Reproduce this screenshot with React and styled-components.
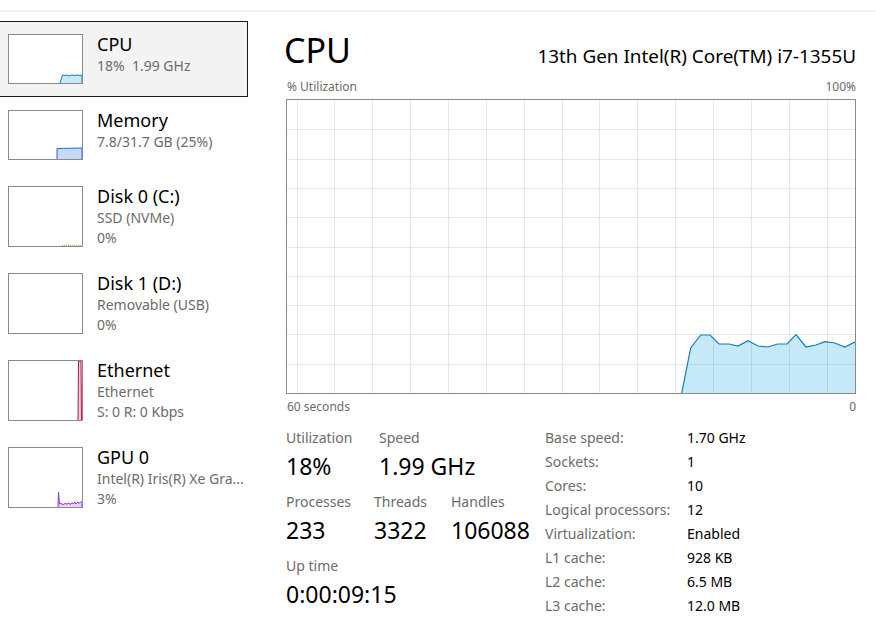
import styled, { createGlobalStyle } from 'styled-components';

const GlobalStyle = createGlobalStyle`
  html, body {
    margin: 0;
    padding: 0;
    background: #ffffff;
  }
  body {
    font-family: 'Noto Sans', 'Segoe UI', sans-serif;
    color: #000;
  }
`;

const Window = styled.div`
  width: 876px;
  height: 635px;
  overflow: hidden;
  background: #fff;
`;

const TopStrip = styled.div`
  height: 10px;
  border-bottom: 2px solid #eef2f2;
`;

const Body = styled.div`
  display: flex;
`;

//sidebar
const Sidebar = styled.div`
  width: 249px;
  padding-top: 9px;
  display: flex;
  flex-direction: column;
`;

const Item = styled.div`
  display: flex;
  align-items: flex-start;
  gap: 14px;
  padding: 12px 0 12px 8px;
  border: 1px solid ${({ $selected }) => ($selected ? '#1a1a1a' : 'transparent')};
  border-left: none;
  background: ${({ $selected }) => ($selected ? '#f3f3f3' : 'transparent')};
  width: 248px;
  box-sizing: border-box;
`;

const Thumb = styled.div`
  width: 75px;
  height: ${({ $h }) => $h}px;
  border: 1px solid #8a8a8a;
  background: #fff;
  box-sizing: border-box;
  flex-shrink: 0;

  svg {
    display: block;
  }
`;

const ItemText = styled.div`
  display: flex;
  flex-direction: column;
  margin-top: -2px;
  margin-bottom: -4px;
`;

const ItemTitle = styled.div`
  font-size: 18px;
  line-height: 24px;
  color: #000;
`;

const ItemSub = styled.div`
  font-size: 14px;
  line-height: 20px;
  color: #6b6b6b;
  white-space: pre;
`;

//main panel
const Main = styled.div`
  flex: 1;
  padding: 0 20px 0 38px;
  display: flex;
  flex-direction: column;
`;

const Header = styled.div`
  display: flex;
  justify-content: space-between;
  align-items: baseline;
  margin-top: 14px;
  height: 53px;
`;

const Title = styled.h1`
  margin: 0;
  font-weight: 400;
  font-size: 34px;
  line-height: 48px;
  margin-left: -2px;
`;

const Model = styled.div`
  font-size: 18.9px;
  line-height: 48px;
`;

const AxisRow = styled.div`
  display: flex;
  justify-content: space-between;
  font-size: 12px;
  line-height: 16px;
  color: #6b6b6b;
  margin-top: ${({ $top }) => $top}px;
  padding-left: 1px;
`;

const Graph = styled.div`
  width: 570px;
  height: 295px;
  border: 1px solid #8a8a8a;
  box-sizing: border-box;
  margin-top: 4px;

  svg {
    display: block;
  }
`;

const Stats = styled.div`
  display: flex;
  margin-top: 13px;
`;

const LeftStats = styled.div`
  width: 258px;
  display: flex;
  flex-direction: column;
`;

const StatRow = styled.div`
  display: flex;
  margin-bottom: 8px;
`;

const Stat = styled.div`
  width: ${({ $w }) => ($w ? `${$w}px` : 'auto')};
  display: flex;
  flex-direction: column;
`;

const StatLabel = styled.div`
  font-size: 14px;
  line-height: 20px;
  color: #6b6b6b;
`;

const StatValue = styled.div`
  font-size: 23px;
  line-height: 36px;
  color: #000;
  white-space: nowrap;
`;

const Specs = styled.div`
  display: grid;
  grid-template-columns: 142px auto;
  grid-auto-rows: 24px;
  align-items: center;
  font-size: 14px;
  margin-top: -3px;
  padding-left: 1px;
`;

const SpecLabel = styled.div`
  color: #6b6b6b;
`;

const SpecValue = styled.div`
  color: #000;
`;

const sideItems = [
  {
    title: 'CPU',
    lines: ['18%  1.99 GHz'],
    h: 50,
    selected: true,
    graph: {
      stroke: '#117dbb',
      fill: '#c6e9f8',
      points: '51,48 53.5,40 56,40.5 58,40 60,41 63,40 66,40.5 69,40 71,40.5 73,40 73,48',
    },
  },
  {
    title: 'Memory',
    lines: ['7.8/31.7 GB (25%)'],
    h: 50,
    graph: {
      stroke: '#1a6ed8',
      fill: '#c6daf7',
      points: '48,48 48,37.5 73,37 73,48',
    },
  },
  {
    title: 'Disk 0 (C:)',
    lines: ['SSD (NVMe)', '0%'],
    h: 61,
    graph: {
      stroke: '#6fae3a',
      fill: 'none',
      points: '53,58.5 55,58.5 57,58 59,58.5 62,58.5 64,58 66,58.5 69,58.5 71,58 73,58.5',
      dash: '1 1',
    },
  },
  {
    title: 'Disk 1 (D:)',
    lines: ['Removable (USB)', '0%'],
    h: 61,
  },
  {
    title: 'Ethernet',
    lines: ['Ethernet', 'S: 0 R: 0 Kbps'],
    h: 61,
    graph: {
      stroke: '#b0164c',
      fill: '#f1c9d7',
      points: '69,59 69.5,0 72,0 72.5,59',
    },
  },
  {
    title: 'GPU 0',
    lines: ['Intel(R) Iris(R) Xe Gra...', '3%'],
    h: 61,
    graph: {
      stroke: '#9132d6',
      fill: '#e6d3f6',
      points:
        '49,59 49.5,44 50.5,56 52,55.5 54,56.5 56,55.5 58,56 60,55 61,56.5 63,55 65,55.5 66,54 67,56 69,54 70,55.5 72,53.5 73,54.5 73,59',
    },
  },
];

const ThumbGraph = ({ h, graph }) => (
  <Thumb $h={h}>
    <svg width="73" height={h - 2} viewBox={`0 0 73 ${h - 2}`}>
      {graph && (
        <polyline
          points={graph.points}
          fill={graph.fill}
          stroke={graph.stroke}
          strokeWidth="1"
          strokeDasharray={graph.dash}
        />
      )}
    </svg>
  </Thumb>
);

const cpuPoints = [
  [394.7, 293],
  [403.7, 248],
  [413.7, 235],
  [423, 235],
  [432, 244],
  [442, 244],
  [451, 246],
  [461, 240.7],
  [471, 246],
  [481, 247],
  [490.7, 244],
  [500, 244],
  [509, 234.7],
  [519, 247],
  [529, 245],
  [538, 241.7],
  [548, 243],
  [557.7, 247],
  [568, 242],
];

const GW = 568;
const GH = 293;

const UsageGraph = () => {
  const vLines = Array.from({ length: 15 }, (_, i) => 9.5 + i * (GW / 15));
  const hLines = Array.from({ length: 9 }, (_, i) => Math.round((i + 1) * (GH / 10)) + 0.5);
  const line = cpuPoints.map(([x, y]) => `${x},${y}`).join(' ');
  const area = `${line} ${GW},${GH} ${cpuPoints[0][0]},${GH}`;

  return (
    <Graph>
      <svg width={GW} height={GH} viewBox={`0 0 ${GW} ${GH}`}>
        <polygon points={area} fill="#c6e9f8" />
        {vLines.map((x) => (
          <line key={`v${x}`} x1={Math.round(x) + 0.5} y1="0" x2={Math.round(x) + 0.5} y2={GH} stroke="rgba(0,0,0,0.09)" />
        ))}
        {hLines.map((y) => (
          <line key={`h${y}`} x1="0" y1={y} x2={GW} y2={y} stroke="rgba(0,0,0,0.09)" />
        ))}
        <polyline points={line} fill="none" stroke="#117dbb" strokeWidth="1.2" />
      </svg>
    </Graph>
  );
};

const specs = [
  ['Base speed:', '1.70 GHz'],
  ['Sockets:', '1'],
  ['Cores:', '10'],
  ['Logical processors:', '12'],
  ['Virtualization:', 'Enabled'],
  ['L1 cache:', '928 KB'],
  ['L2 cache:', '6.5 MB'],
  ['L3 cache:', '12.0 MB'],
];

const App = () => {
  return (
    <Window>
      <GlobalStyle />
      <TopStrip />
      <Body>
        <Sidebar>
          {sideItems.map((item) => (
            <Item key={item.title} $selected={item.selected}>
              <ThumbGraph h={item.h} graph={item.graph} />
              <ItemText>
                <ItemTitle>{item.title}</ItemTitle>
                {item.lines.map((l) => (
                  <ItemSub key={l}>{l}</ItemSub>
                ))}
              </ItemText>
            </Item>
          ))}
        </Sidebar>

        <Main>
          <Header>
            <Title>CPU</Title>
            <Model>13th Gen Intel(R) Core(TM) i7-1355U</Model>
          </Header>
          <AxisRow $top={0}>
            <span>% Utilization</span>
            <span>100%</span>
          </AxisRow>
          <UsageGraph />
          <AxisRow $top={5}>
            <span>60 seconds</span>
            <span>0</span>
          </AxisRow>

          <Stats>
            <LeftStats>
              <StatRow>
                <Stat $w={93}>
                  <StatLabel>Utilization</StatLabel>
                  <StatValue>18%</StatValue>
                </Stat>
                <Stat>
                  <StatLabel>Speed</StatLabel>
                  <StatValue>1.99 GHz</StatValue>
                </Stat>
              </StatRow>
              <StatRow>
                <Stat $w={88}>
                  <StatLabel>Processes</StatLabel>
                  <StatValue>233</StatValue>
                </Stat>
                <Stat $w={77}>
                  <StatLabel>Threads</StatLabel>
                  <StatValue>3322</StatValue>
                </Stat>
                <Stat>
                  <StatLabel>Handles</StatLabel>
                  <StatValue>106088</StatValue>
                </Stat>
              </StatRow>
              <StatRow>
                <Stat>
                  <StatLabel>Up time</StatLabel>
                  <StatValue>0:00:09:15</StatValue>
                </Stat>
              </StatRow>
            </LeftStats>
            <Specs>
              {specs.map(([k, v]) => (
                <>
                  <SpecLabel key={k}>{k}</SpecLabel>
                  <SpecValue key={`${k}-v`}>{v}</SpecValue>
                </>
              ))}
            </Specs>
          </Stats>
        </Main>
      </Body>
    </Window>
  );
};

export default App;
